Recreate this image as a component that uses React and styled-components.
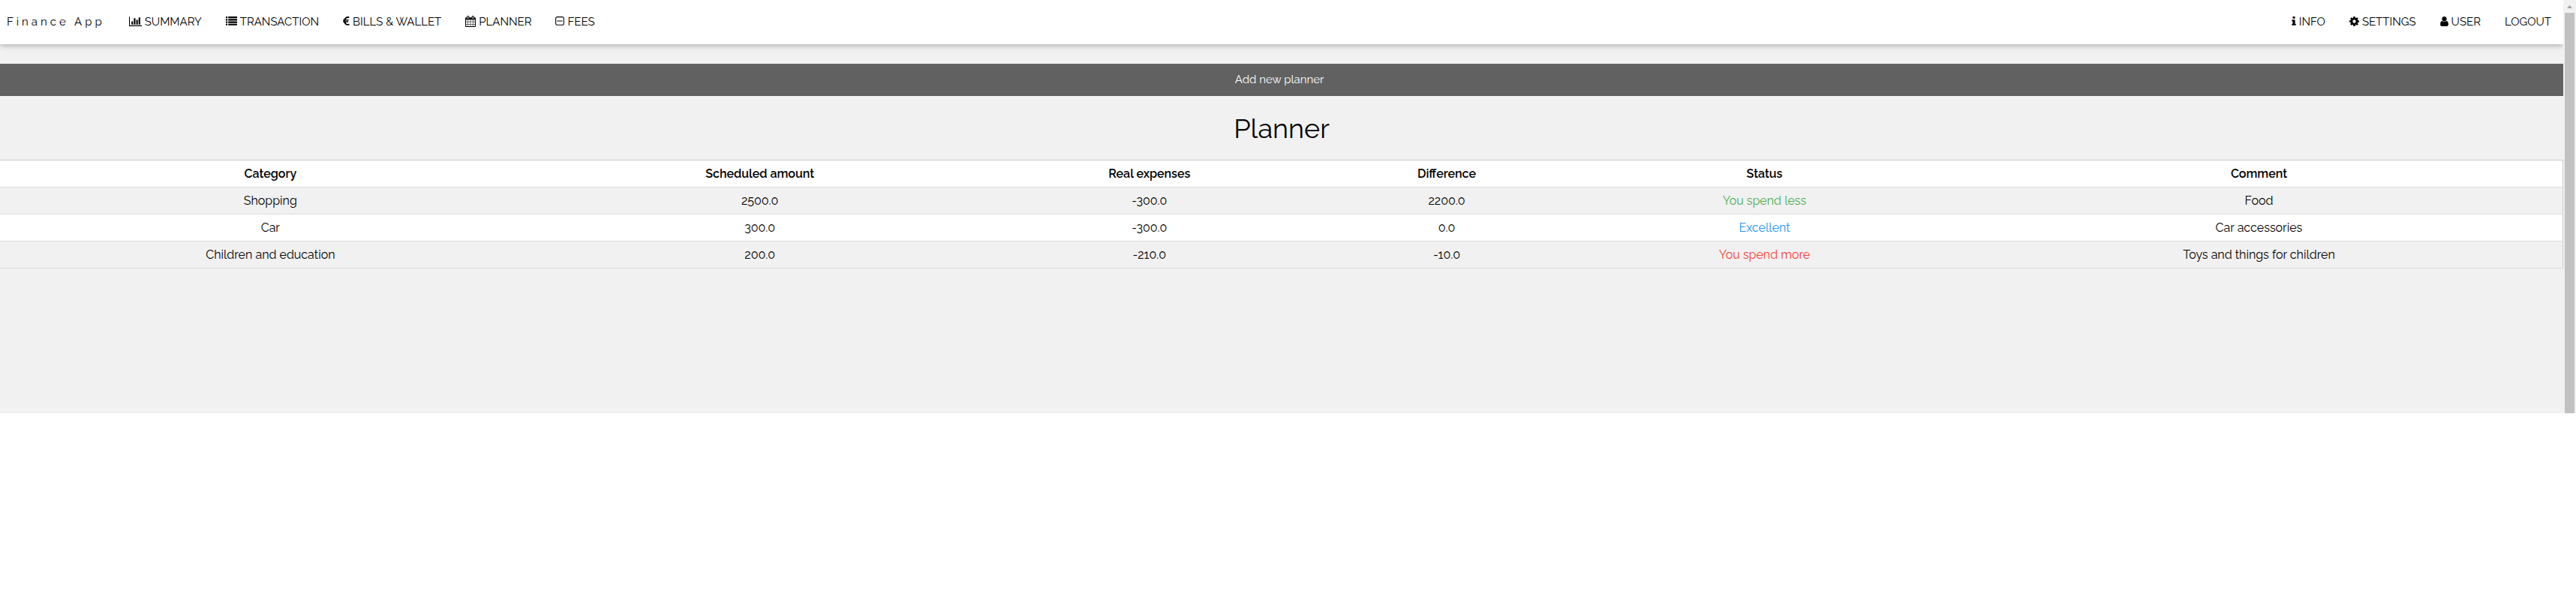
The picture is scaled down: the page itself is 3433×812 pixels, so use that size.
import React from "react";
import styled, { createGlobalStyle } from "styled-components";

const GlobalStyle = createGlobalStyle`
  *, *::before, *::after { box-sizing: border-box; }
  body {
    margin: 0;
    background: #fff;
    color: #000;
    font-family: Raleway, Lato, "Open Sans", sans-serif;
    font-size: 16px;
    line-height: 24px;
  }
`;

const Window = styled.div`
  display: flex;
  background: #f1f1f1;
`;

const Page = styled.div`
  flex: 1;
  min-width: 0;
  padding-bottom: 193px;
`;

const NavBar = styled.nav`
  display: flex;
  justify-content: space-between;
  padding: 9px 0 10px;
  background: #fff;
  box-shadow: 0 2px 5px rgba(0, 0, 0, 0.16), 0 2px 10px rgba(0, 0, 0, 0.12);
`;

const NavGroup = styled.div`
  display: flex;
`;

const Brand = styled.a`
  padding: 8px 16px 8px 9px;
  color: #000;
  font-size: 15px;
  letter-spacing: 4px;
  text-decoration: none;
`;

const NavLink = styled.a`
  display: flex;
  align-items: center;
  gap: 4px;
  padding: 8px 16px;
  color: #000;
  font-size: 15px;
  text-decoration: none;
  white-space: nowrap;
`;

const Glyph = styled.svg`
  flex: none;
  width: ${(p) => p.$width}px;
  height: 15px;
  margin-bottom: 2px;
  fill: currentColor;
`;

const AddButton = styled.button`
  display: block;
  width: 100%;
  margin-top: 26px;
  padding: 9px 22px 10px 16px;
  border: 0;
  background: #616161;
  color: #fff;
  font: inherit;
  font-size: 15px;
  cursor: pointer;
`;

const Title = styled.h1`
  margin: 17px 0 15px;
  font-size: 36px;
  font-weight: 400;
  line-height: 53px;
  text-align: center;
`;

const Table = styled.table`
  width: 100%;
  table-layout: fixed;
  border-collapse: collapse;
  border: 1px solid #ccc;
  border-left: 0;
  text-align: center;
`;

const Column = styled.col`
  width: ${(p) => p.$share}%;
`;

const Row = styled.tr`
  height: 36px;
  border-bottom: 1px solid #ddd;
  background: ${(p) => (p.$striped ? "#f1f1f1" : "#fff")};
`;

const HeadCell = styled.th`
  padding: 0 8px;
  font-weight: 600;
`;

const Cell = styled.td`
  padding: 0 8px;
  color: ${(p) => p.$color || "#000"};
`;

const ScrollTrack = styled.div`
  display: flex;
  flex-direction: column;
  flex: none;
  width: 17px;
  padding: 0 2px;
  background: #f1f1f1;
`;

const ScrollArrow = styled.svg`
  width: 13px;
  height: 17px;
  fill: #a3a3a3;
`;

const ScrollThumb = styled.div`
  flex: 1;
  background: #c1c1c1;
`;

const icons = {
  chart: {
    width: 17,
    box: "0 0 2048 1792",
    d: "M640 896v512h-256v-512h256zM1024 384v1024h-256v-1024h256zM2048 1536v128h-2048v-1536h128v1408h1920zM1408 640v768h-256v-768h256zM1792 256v1152h-256v-1152h256z",
  },
  list: {
    width: 15,
    box: "0 0 1792 1792",
    d: "M0 1280h256v256h-256zM0 896h256v256h-256zM0 512h256v256h-256zM0 128h256v256h-256zM384 1280h1408v256h-1408zM384 896h1408v256h-1408zM384 512h1408v256h-1408zM384 128h1408v256h-1408z",
  },
  euro: {
    width: 9,
    box: "384 0 1024 1792",
    d: "M1360 1307l35 159q3 12-3 22.5t-17 14.5l-5 1q-4 2-10.5 3.5t-16 4.5-21.5 5.5-25.5 5-30 5-33.5 4.5-36.5 3-38.5 1q-234 0-409-130.5t-238-351.5h-95q-13 0-22.5-9.5t-9.5-22.5v-113q0-13 9.5-22.5t22.5-9.5h66q-2-57 1-105h-67q-14 0-23-9t-9-23v-114q0-14 9-23t23-9h98q67-210 243.5-338t400.5-128q102 0 194 23 11 3 20 15 6 11 3 24l-43 159q-3 13-14 19.5t-24 2.5l-4-1q-4-1-11.5-2.5l-17.5-3.5-22.5-3.5-26-3-29-2.5-29.5-1q-126 0-226 64t-150 176h468q16 0 25 12 10 12 7 26l-24 114q-5 26-32 26h-488q-3 37 0 105h459q15 0 25 12 9 12 6 27l-24 112q-2 11-11 18.5t-20 7.5h-387q48 117 149.5 185.5t228.5 68.5q18 0 36-1t33.5-3.5 29.5-4.5 24.5-5 18.5-4l12-3 5-2q13-5 26 2 12 7 15 21z",
  },
  calendar: {
    width: 14,
    box: "64 0 1664 1792",
    d: "M192 1664h288v-288h-288v288zm352 0h320v-288h-320v288zm-352-352h288v-320h-288v320zm352 0h320v-320h-320v320zm-352-384h288v-288h-288v288zm736 736h320v-288h-320v288zm-384-736h320v-288h-320v288zm768 736h288v-288h-288v288zm-384-352h320v-320h-320v320zm-352-864v-288q0-13-9.5-22.5t-22.5-9.5h-64q-13 0-22.5 9.5t-9.5 22.5v288q0 13 9.5 22.5t22.5 9.5h64q13 0 22.5-9.5t9.5-22.5zm736 864h288v-320h-288v320zm-384-384h320v-288h-320v288zm384 0h288v-288h-288v288zm32-480v-288q0-13-9.5-22.5t-22.5-9.5h-64q-13 0-22.5 9.5t-9.5 22.5v288q0 13 9.5 22.5t22.5 9.5h64q13 0 22.5-9.5t9.5-22.5zm384-64v1280q0 52-38 90t-90 38h-1408q-52 0-90-38t-38-90v-1280q0-52 38-90t90-38h128v-96q0-66 47-113t113-47h64q66 0 113 47t47 113v96h384v-96q0-66 47-113t113-47h64q66 0 113 47t47 113v96h128q52 0 90 38t38 90z",
  },
  minus: {
    width: 12,
    box: "192 0 1408 1792",
    d: "M1344 800v64q0 14-9 23t-23 9h-832q-14 0-23-9t-9-23v-64q0-14 9-23t23-9h832q14 0 23 9t9 23zm128 448v-832q0-66-47-113t-113-47h-832q-66 0-113 47t-47 113v832q0 66 47 113t113 47h832q66 0 113-47t47-113zm128-832v832q0 119-84.5 203.5t-203.5 84.5h-832q-119 0-203.5-84.5t-84.5-203.5v-832q0-119 84.5-203.5t203.5-84.5h832q119 0 203.5 84.5t84.5 203.5z",
  },
  info: {
    width: 6,
    box: "576 0 640 1792",
    d: "M1216 1344v128q0 26-19 45t-45 19h-512q-26 0-45-19t-19-45v-128q0-26 19-45t45-19h64v-384h-64q-26 0-45-19t-19-45v-128q0-26 19-45t45-19h384q26 0 45 19t19 45v576h64q26 0 45 19t19 45zm-128-1152v192q0 26-19 45t-45 19h-256q-26 0-45-19t-19-45v-192q0-26 19-45t45-19h256q26 0 45 19t19 45z",
  },
  cog: {
    width: 13,
    box: "128 0 1536 1792",
    d: "M1152 896q0-106-75-181t-181-75-181 75-75 181 75 181 181 75 181-75 75-181zm512-109v222q0 12-8 23t-20 13l-185 28q-19 54-39 91 35 50 107 138 10 12 10 25t-9 23q-27 37-99 108t-94 71q-12 0-26-9l-138-108q-44 23-91 38-16 136-29 186-7 28-36 28h-222q-14 0-24.5-8.5t-11.5-21.5l-28-184q-49-16-90-37l-141 107q-10 9-25 9-14 0-25-11-126-114-165-168-7-10-7-23 0-12 8-23 15-21 51-66.5t54-70.5q-27-50-41-99l-183-27q-13-2-21-12.5t-8-23.5v-222q0-12 8-23t19-13l186-28q14-46 39-92-40-57-107-138-10-12-10-24 0-10 9-23 26-36 98.5-107.5t94.5-71.5q13 0 26 10l138 107q44-23 91-38 16-136 29-186 7-28 36-28h222q14 0 24.5 8.5t11.5 21.5l28 184q49 16 90 37l142-107q9-9 24-9 13 0 25 10 129 119 165 170 7 8 7 22 0 12-8 23-15 21-51 66.5t-54 70.5q26 50 41 98l183 28q13 2 21 12.5t8 23.5z",
  },
  user: {
    width: 11,
    box: "256 0 1280 1792",
    d: "M1536 1399q0 109-62.5 187t-150.5 78h-854q-88 0-150.5-78t-62.5-187q0-85 8.5-160.5t31.5-152 58.5-131 94-89 134.5-34.5q131 128 313 128t313-128q76 0 134.5 34.5t94 89 58.5 131 31.5 152 8.5 160.5zm-256-887q0 159-112.5 271.5t-271.5 112.5-271.5-112.5-112.5-271.5 112.5-271.5 271.5-112.5 271.5 112.5 112.5 271.5z",
  },
};

function NavItem({ icon, label }) {
  const glyph = icons[icon];
  return (
    <NavLink href="#">
      {glyph && (
        <Glyph $width={glyph.width} viewBox={glyph.box} aria-hidden="true">
          <path d={glyph.d} />
        </Glyph>
      )}
      {label}
    </NavLink>
  );
}

const columns = [
  { label: "Category", share: 21.1 },
  { label: "Scheduled amount", share: 17.1 },
  { label: "Real expenses", share: 13.3 },
  { label: "Difference", share: 9.9 },
  { label: "Status", share: 14.9 },
  { label: "Comment", share: 23.7 },
];

const plans = [
  { category: "Shopping", scheduled: "2500.0", real: "-300.0", difference: "2200.0", status: "You spend less", color: "#4caf50", comment: "Food" },
  { category: "Car", scheduled: "300.0", real: "-300.0", difference: "0.0", status: "Excellent", color: "#2196f3", comment: "Car accessories" },
  { category: "Children and education", scheduled: "200.0", real: "-210.0", difference: "-10.0", status: "You spend more", color: "#f44336", comment: "Toys and things for children" },
];

export default function App() {
  return (
    <>
      <GlobalStyle />
      <Window>
        <Page>
          <NavBar>
            <NavGroup>
              <Brand href="#">Finance App</Brand>
              <NavItem icon="chart" label="SUMMARY" />
              <NavItem icon="list" label="TRANSACTION" />
              <NavItem icon="euro" label="BILLS & WALLET" />
              <NavItem icon="calendar" label="PLANNER" />
              <NavItem icon="minus" label="FEES" />
            </NavGroup>
            <NavGroup>
              <NavItem icon="info" label="INFO" />
              <NavItem icon="cog" label="SETTINGS" />
              <NavItem icon="user" label="USER" />
              <NavItem label="LOGOUT" />
            </NavGroup>
          </NavBar>
          <main>
            <AddButton type="button">Add new planner</AddButton>
            <Title>Planner</Title>
            <Table>
              <colgroup>
                {columns.map((c) => (
                  <Column key={c.label} $share={c.share} />
                ))}
              </colgroup>
              <thead>
                <Row>
                  {columns.map((c) => (
                    <HeadCell key={c.label} scope="col">{c.label}</HeadCell>
                  ))}
                </Row>
              </thead>
              <tbody>
                {plans.map((p, i) => (
                  <Row key={p.category} $striped={i % 2 === 0}>
                    <Cell>{p.category}</Cell>
                    <Cell>{p.scheduled}</Cell>
                    <Cell>{p.real}</Cell>
                    <Cell>{p.difference}</Cell>
                    <Cell $color={p.color}>{p.status}</Cell>
                    <Cell>{p.comment}</Cell>
                  </Row>
                ))}
              </tbody>
            </Table>
          </main>
        </Page>
        <ScrollTrack aria-hidden="true">
          <ScrollArrow viewBox="0 0 13 17">
            <path d="M3 11L6.500 7L10 11z" />
          </ScrollArrow>
          <ScrollThumb />
        </ScrollTrack>
      </Window>
    </>
  );
}
